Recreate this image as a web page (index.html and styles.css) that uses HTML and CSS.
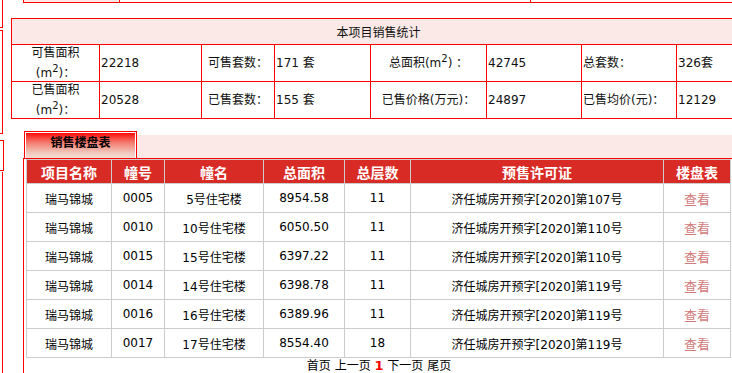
FILE: index.html
```html
<!DOCTYPE html>
<html lang="zh-CN">
<head>
<meta charset="utf-8">
<title>项目销售统计</title>
<link rel="stylesheet" href="styles.css">
</head>
<body>
<div class="page">
  <div class="side">
    <div class="side-box side-a"></div>
    <div class="side-box side-b"></div>
    <div class="side-box side-c"></div>
    <div class="side-box side-d"></div>
  </div>
  <div class="main">
    <div class="top-table">
      <div class="tc tc-label"></div>
      <div class="tc"></div>
      <div class="tc"></div>
    </div>

    <div class="stats">
      <div class="st-head">本项目销售统计</div>
      <div class="sc c"><span>可售面积(m<sup>2</sup>)：</span></div>
      <div class="sc"><span>22218</span></div>
      <div class="sc c"><span>可售套数：</span></div>
      <div class="sc"><span>171 套</span></div>
      <div class="sc c"><span>总面积(m<sup>2</sup>) ：</span></div>
      <div class="sc"><span>42745</span></div>
      <div class="sc"><span>总套数：</span></div>
      <div class="sc"><span>326套</span></div>
      <div class="sc c"><span>已售面积(m<sup>2</sup>)：</span></div>
      <div class="sc"><span>20528</span></div>
      <div class="sc c"><span>已售套数：</span></div>
      <div class="sc"><span>155 套</span></div>
      <div class="sc c"><span>已售价格(万元)：</span></div>
      <div class="sc"><span>24897</span></div>
      <div class="sc"><span>已售均价(元)：</span></div>
      <div class="sc"><span>12129</span></div>
    </div>

    <div class="panel">
      <div class="tabbar">
        <div class="tab">销售楼盘表</div>
        <div class="tab-fill"></div>
      </div>
      <div class="panel-body">
        <div class="list">
          <div class="lh">项目名称</div>
          <div class="lh">幢号</div>
          <div class="lh">幢名</div>
          <div class="lh">总面积</div>
          <div class="lh">总层数</div>
          <div class="lh">预售许可证</div>
          <div class="lh">楼盘表</div>

          <div class="lc">瑞马锦城</div><div class="lc">0005</div><div class="lc">5号住宅楼</div><div class="lc">8954.58</div><div class="lc">11</div><div class="lc">济任城房开预字[2020]第107号</div><div class="lc view">查看</div>
          <div class="lc">瑞马锦城</div><div class="lc">0010</div><div class="lc">10号住宅楼</div><div class="lc">6050.50</div><div class="lc">11</div><div class="lc">济任城房开预字[2020]第110号</div><div class="lc view">查看</div>
          <div class="lc">瑞马锦城</div><div class="lc">0015</div><div class="lc">15号住宅楼</div><div class="lc">6397.22</div><div class="lc">11</div><div class="lc">济任城房开预字[2020]第110号</div><div class="lc view">查看</div>
          <div class="lc">瑞马锦城</div><div class="lc">0014</div><div class="lc">14号住宅楼</div><div class="lc">6398.78</div><div class="lc">11</div><div class="lc">济任城房开预字[2020]第119号</div><div class="lc view">查看</div>
          <div class="lc">瑞马锦城</div><div class="lc">0016</div><div class="lc">16号住宅楼</div><div class="lc">6389.96</div><div class="lc">11</div><div class="lc">济任城房开预字[2020]第119号</div><div class="lc view">查看</div>
          <div class="lc">瑞马锦城</div><div class="lc">0017</div><div class="lc">17号住宅楼</div><div class="lc">8554.40</div><div class="lc">18</div><div class="lc">济任城房开预字[2020]第119号</div><div class="lc view">查看</div>
        </div>
        <div class="pager">首页 上一页 <b class="cur">1</b> 下一页 尾页</div>
      </div>
    </div>
  </div>
</div>
</body>
</html>
```

FILE: styles.css
```css
html, body {
  margin: 0;
  padding: 0;
  background: #fff;
  overflow: hidden;
}

body {
  font-family: "DejaVu Sans", "Noto Sans CJK SC", sans-serif;
  font-size: 12px;
  color: #000;
}

.page {
  display: flex;
  width: 732px;
  height: 373px;
  overflow: hidden;
}

.side {
  width: 3px;
  flex: none;
  display: flex;
  flex-direction: column;
}

.side-box {
  border-right: 1px solid #f00;
  width: 3px;
  box-sizing: border-box;
}
.side-a { height: 28px; border-bottom: 1px solid #f00; }
.side-b { height: 104px; margin-top: 2px; border-top: 1px solid #f00; border-bottom: 1px solid #f00; }
.side-c { height: 31px; margin-top: 6px; border-top: 1px solid #f00; border-bottom: 1px solid #f00; width: 4px; }
.side-d { flex: 1; margin-top: 1px; }

.main {
  flex: 1;
  min-width: 0;
}

/* top (scrolled) table */
.top-table {
  margin-left: 20px;
  display: grid;
  grid-template-columns: 95px 410px 400px;
  grid-template-rows: 2px;
  gap: 1px;
  padding: 0 1px 1px 1px;
  background: #f00;
  width: max-content;
}
.tc { background: #fff; }
.tc-label { background: #fae9e6; }

/* stats */
.stats {
  margin: 15px 0 0 8px;
  display: grid;
  grid-template-columns: 87px 101px 72px 95px 115px 94px 94px 68px;
  grid-template-rows: 25px 36px 36px;
  gap: 1px;
  padding: 1px;
  background: #f00;
  width: max-content;
  color: #111;
}
.st-head {
  grid-column: 1 / -1;
  background: #fae9e6;
  display: flex;
  align-items: center;
  justify-content: center;
}
.sc {
  background: #fff;
  display: flex;
  align-items: center;
  padding: 0 1px;
  line-height: 20px;
}
.sc.c {
  justify-content: center;
  text-align: center;
}
sup {
  font-size: 10px;
  line-height: 0;
  vertical-align: 5px;
}

/* panel */
.panel {
  margin: 12px 0 0 20px;
}
.tabbar {
  display: flex;
  height: 27px;
}
.tab {
  margin-left: 1px;
  width: 111px;
  height: 26px;
  border: 1px solid #f00;
  border-bottom: none;
  box-shadow: inset 1px 1px 0 #fff, inset -1px 0 0 #fff;
  background: linear-gradient(#ff0000 0%, #f47a6e 40%, #f0c9bc 80%, #f6ddd5 100%);
  font-weight: bold;
  font-size: 12px;
  line-height: 22px;
  text-align: center;
  color: #000;
}
.tab-fill {
  flex: 1;
  margin-top: 4px;
  background: #fae9e6;
}
.panel-body {
  border-top: 1px solid #f00;
  border-left: 1px solid #f00;
  padding-left: 2px;
  height: 300px;
}

.list {
  display: grid;
  grid-template-columns: 84px 52px 98px 80px 65px 252px 66px;
  grid-template-rows: 23px repeat(6, 28px);
  gap: 1px;
  padding: 1px;
  background: #ccc;
  width: max-content;
}
.lh {
  background: #d92b26;
  color: #fff;
  font-weight: bold;
  font-size: 14px;
  display: flex;
  align-items: center;
  justify-content: center;
}
.lc {
  background: #fff;
  display: flex;
  align-items: center;
  justify-content: center;
}
.lc.view {
  color: #d07a7a;
  font-size: 13px;
}

.pager {
  width: 706px;
  text-align: center;
  line-height: 16px;
}
.cur {
  color: #f00;
  font-size: 13px;
}
```
